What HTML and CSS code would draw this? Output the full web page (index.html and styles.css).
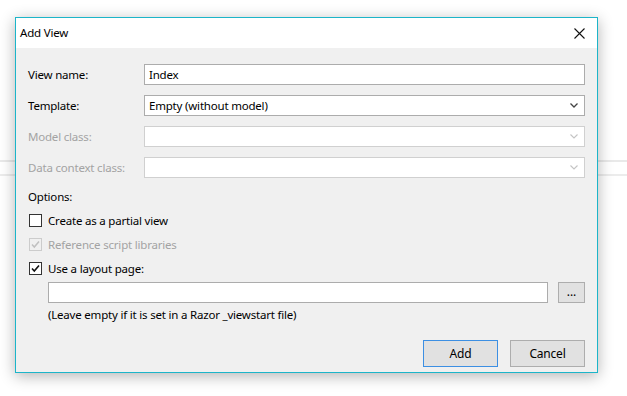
FILE: index.html
```html
<!DOCTYPE html>
<html lang="en">
<head>
    <meta charset="UTF-8">
    <title>Add View</title>
    <link rel="stylesheet" href="styles.css">
</head>
<body>
    <div class="dialog">
        <div class="titlebar">
            <span class="title">Add View</span>
            <svg class="close" width="11" height="11" viewBox="0 0 11 11">
                <path d="M0.5 0.5 L10.5 10.5 M10.5 0.5 L0.5 10.5" stroke="#111" stroke-width="1.1" fill="none"/>
            </svg>
        </div>
        <div class="content">
            <div class="fields">
                <label>View name:</label>
                <div class="field">Index</div>
                <label>Template:</label>
                <div class="field select">Empty (without model)
                    <svg class="chevron" width="8" height="5" viewBox="0 0 8 5"><path d="M0.5 0.5 L4 4 L7.5 0.5" stroke="#444" stroke-width="1.3" fill="none"/></svg>
                </div>
                <label class="disabled">Model class:</label>
                <div class="field select off">
                    <svg class="chevron" width="8" height="5" viewBox="0 0 8 5"><path d="M0.5 0.5 L4 4 L7.5 0.5" stroke="#c4c4c4" stroke-width="1.1" fill="none"/></svg>
                </div>
                <label class="disabled">Data context class:</label>
                <div class="field select off">
                    <svg class="chevron" width="8" height="5" viewBox="0 0 8 5"><path d="M0.5 0.5 L4 4 L7.5 0.5" stroke="#c4c4c4" stroke-width="1.1" fill="none"/></svg>
                </div>
            </div>

            <div class="line">Options:</div>
            <div class="line check">
                <span class="box"></span>Create as a partial view
            </div>
            <div class="line check disabled">
                <span class="box off">
                    <svg width="11" height="11" viewBox="0 0 11 11"><path d="M2 5.5 L4.3 8 L9 2.5" stroke="#c0c0c0" stroke-width="1.5" fill="none"/></svg>
                </span>Reference script libraries
            </div>
            <div class="line check">
                <span class="box">
                    <svg width="11" height="11" viewBox="0 0 11 11"><path d="M2 5.5 L4.3 8 L9 2.5" stroke="#111" stroke-width="1.6" fill="none"/></svg>
                </span>Use a layout page:
            </div>
            <div class="layout-row">
                <div class="field"></div>
                <button class="browse">...</button>
            </div>
            <div class="note">(Leave empty if it is set in a Razor _viewstart file)</div>

            <div class="actions">
                <button class="btn default">Add</button>
                <button class="btn">Cancel</button>
            </div>
        </div>
    </div>
</body>
</html>
```

FILE: styles.css
```css
body {
    margin: 0;
    height: 396px;
    overflow: hidden;
    font-family: "Segoe UI", "Noto Sans", sans-serif;
    font-size: 11.5px;
    letter-spacing: -0.2px;
    color: #000;
    background:
        linear-gradient(#e9e9e9, #e9e9e9) 0 160px / 100% 2px no-repeat,
        linear-gradient(#ececec, #ececec) 0 174px / 100% 2px no-repeat,
        #fff;
}
.dialog {
    box-sizing: border-box;
    width: 583px;
    height: 356px;
    margin: 17px 0 0 15px;
    border: 1px solid #1cb5c9;
    background: #f0f0f0;
    box-shadow: 0 3px 14px rgba(0, 0, 0, 0.3);
    display: flex;
    flex-direction: column;
}
.titlebar {
    height: 30px;
    background: #fff;
    display: flex;
    align-items: center;
    justify-content: space-between;
    padding: 0 12px 0 4px;
}
.title {
    margin-top: -1px;
}
.content {
    flex: 1;
    display: flex;
    flex-direction: column;
    padding: 16px 12px 5px 12px;
}
.fields {
    display: grid;
    grid-template-columns: 116px 1fr;
    grid-auto-rows: 21px;
    row-gap: 10px;
    align-items: center;
}
.disabled {
    color: #a3a3a3;
}
.field {
    box-sizing: border-box;
    height: 21px;
    background: #fff;
    border: 1px solid #acacac;
    padding: 0 4px;
    line-height: 19px;
    display: flex;
    align-items: center;
}
.field.off {
    border-color: #d0d0d0;
}
.chevron {
    margin: 0 2px 0 auto;
}
.line {
    height: 24px;
    display: flex;
    align-items: center;
}
.fields + .line {
    margin-top: 6px;
}
.box {
    box-sizing: border-box;
    width: 13px;
    height: 13px;
    margin: 0 6px 0 1px;
    border: 1px solid #333;
    background: #fff;
    display: flex;
    align-items: center;
    justify-content: center;
}
.box.off {
    border-color: #cccccc;
    background: #f0f0f0;
}
.layout-row {
    display: flex;
    gap: 10px;
    margin: 2px 0 0 20px;
}
.layout-row .field {
    flex: 1;
}
.browse {
    box-sizing: border-box;
    width: 27px;
    height: 21px;
    padding: 0 0 4px;
    border: 1px solid #adadad;
    background: #e1e1e1;
    font-family: inherit;
    font-size: 12px;
}
.note {
    margin: 4px 0 0 20px;
    height: 16px;
    line-height: 16px;
}
.actions {
    margin-top: auto;
    display: flex;
    justify-content: flex-end;
    gap: 12px;
}
.btn {
    box-sizing: border-box;
    width: 75px;
    height: 27px;
    border: 1px solid #adadad;
    background: #e1e1e1;
    font-family: inherit;
    font-size: 12px;
    letter-spacing: -0.2px;
    color: #000;
}
.btn.default {
    border-color: #3c8fe3;
}
```
